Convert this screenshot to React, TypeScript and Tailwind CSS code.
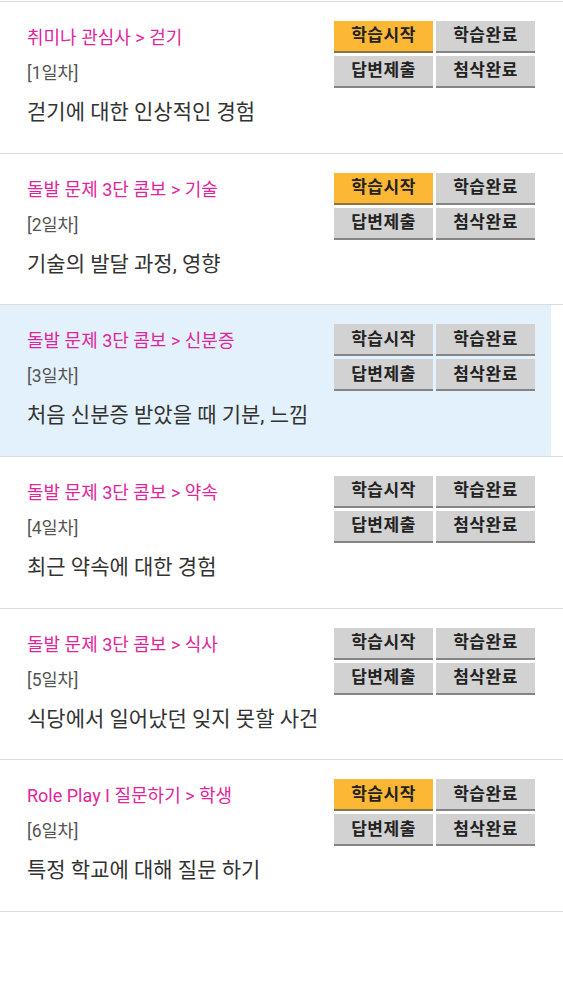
import React from 'react';

type Lesson = {
  title: string;
  day: number;
  desc: string;
  started: boolean;
  active?: boolean;
};

const lessons: Lesson[] = [
  { title: '취미나 관심사 > 걷기', day: 1, desc: '걷기에 대한 인상적인 경험', started: true },
  { title: '돌발 문제 3단 콤보 > 기술', day: 2, desc: '기술의 발달 과정, 영향', started: true },
  { title: '돌발 문제 3단 콤보 > 신분증', day: 3, desc: '처음 신분증 받았을 때 기분, 느낌', started: false, active: true },
  { title: '돌발 문제 3단 콤보 > 약속', day: 4, desc: '최근 약속에 대한 경험', started: false },
  { title: '돌발 문제 3단 콤보 > 식사', day: 5, desc: '식당에서 일어났던 잊지 못할 사건', started: false },
  { title: 'Role Play I 질문하기 > 학생', day: 6, desc: '특정 학교에 대해 질문 하기', started: true },
];

const StepButton = ({ label, on }: { label: string; on?: boolean }) => (
  <div
    className={
      on
        ? 'flex h-[32px] items-center justify-center border-b-2 border-[#8a7448] bg-[#fcb734] text-[17px] font-bold tracking-[0.5px] text-[#222]'
        : 'flex h-[32px] items-center justify-center border-b-2 border-[#858585] bg-[#d2d2d2] text-[17px] font-bold tracking-[0.5px] text-[#222]'
    }
  >
    {label}
  </div>
);

const LessonRow = ({ item }: { item: Lesson }) => (
  <div className="border-b border-[#dcdcdc]">
    <div
      className={
        item.active
          ? 'mr-[12px] flex h-[150.67px] bg-[#e3f1fc] pl-[27px] pr-[16px] pt-[19px]'
          : 'flex h-[150.67px] pl-[27px] pr-[28px] pt-[19px]'
      }
    >
      <div className="flex-1">
        <div className="mt-[4px] text-[18px] leading-[26px] text-[#e0269c]">{item.title}</div>
        <div className="mt-[10px] text-[17.5px] leading-[24px] text-[#555]">[{item.day}일차]</div>
        <div className="mt-[13px] text-[21px] leading-[28px] text-[#333]">{item.desc}</div>
      </div>
      <div className="grid h-fit w-[201px] grid-cols-2 gap-[3px]">
        <StepButton label="학습시작" on={item.started} />
        <StepButton label="학습완료" />
        <StepButton label="답변제출" />
        <StepButton label="첨삭완료" />
      </div>
    </div>
  </div>
);

export default function App() {
  return (
    <div
      className="min-h-[1000px] w-[563px] bg-white pt-[1px]"
      style={{ fontFamily: 'Roboto, "Noto Sans CJK KR", sans-serif' }}
    >
      <div className="border-t border-[#dcdcdc]">
        {lessons.map((item) => (
          <LessonRow key={item.day} item={item} />
        ))}
      </div>
    </div>
  );
}
